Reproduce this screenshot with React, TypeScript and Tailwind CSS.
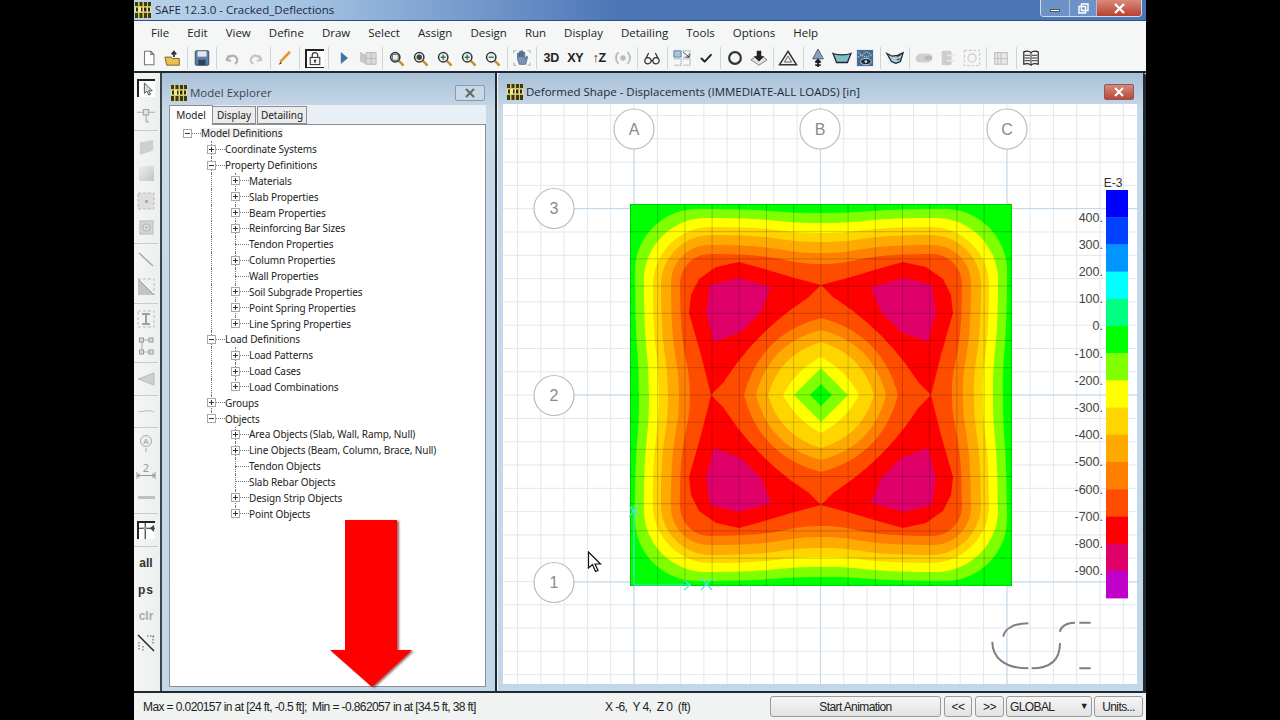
import React from "react";

const SafeLogo = () => (
  <svg width="16" height="16" viewBox="0 0 16 16" className="shrink-0">
    <rect width="16" height="16" fill="#d8c94a" />
    <path d="M0 0h3v4H0zM4.500 0h3v4h-3zM9 0h3v4H9zM13 0h3v4h-3zM0 11h3v5H0zM4.500 11h3v5h-3zM9 11h3v5H9zM13 11h3v5h-3z" fill="#3a3a18" />
    <rect y="5" width="16" height="5" fill="#f0e9a0" />
    <path d="M1 5.500h2v4H1zM6 5.500h1.500v4H6zM9 5.500h2.500v4H9zM13 5.500h2v4h-2z" fill="#2c2c10" />
  </svg>
);

const Zoom = ({ mark }: { mark?: string }) => (
  <svg width="17" height="17" viewBox="0 0 20 20">
    <path d="M12 12l5.500 5.500" stroke="#c89030" strokeWidth="3" strokeLinecap="round" />
    <circle cx="8.500" cy="8.500" r="5.500" fill="#e8f0f4" stroke="#30383c" strokeWidth="1.800" />
    {mark === "fill" && <circle cx="8.500" cy="8.500" r="3.200" fill="#444" />}
    {mark === "box" && <rect x="5" y="5" width="7" height="7" fill="none" stroke="#444" />}
    {(mark === "plus" || mark === "minus" || mark === "dot") && <path d="M5.500 8.500h6" stroke="#2a6a40" strokeWidth="1.500" />}
    {(mark === "plus" || mark === "dot") && <path d="M8.500 5.500v6" stroke="#2a6a40" strokeWidth="1.500" />}
  </svg>
);

const Txt = ({ children, dim }: { children: React.ReactNode; dim?: boolean }) => (
  <span className={`font-['Liberation_Sans',sans-serif] text-[12.500px] font-bold tracking-[-0.3px] ${dim ? "text-[#b0b0b0]" : "text-[#222]"}`}>{children}</span>
);

const ic = (d: string, stroke = "#555", fill = "none", sw = 1.5) => (
  <svg width="18" height="18" viewBox="0 0 20 20">
    <path d={d} stroke={stroke} fill={fill} strokeWidth={sw} strokeLinejoin="round" strokeLinecap="round" />
  </svg>
);

type Tool = { n: React.ReactNode; box?: boolean } | "sep";

const topTools: Tool[] = [
  { n: ic("M5 2.500h7l3.500 3.500v11.500H5zM12 2.500V6h3.500", "#777", "#fff", 1.2) },
  { n: <svg width="20" height="18" viewBox="0 0 22 20"><path d="M2 9h7l1 1.500h8V18H4z" fill="#e8c050" stroke="#7a5a20" /><path d="M12 9V4M9.500 6l2.500-3 2.500 3" stroke="#333" strokeWidth="2" fill="none" /></svg> },
  "sep",
  { n: <svg width="18" height="18" viewBox="0 0 20 20"><rect x="2.500" y="2" width="15" height="16" rx="1" fill="#5f7fa8" stroke="#33465f" /><rect x="5" y="2.500" width="10" height="6" fill="#e4e8ee" /><rect x="6" y="12" width="8" height="6" fill="#2e3f58" /></svg> },
  "sep",
  { n: ic("M6 8l-2 4 4 1M4.500 11.500C7 6.500 13 6 15.500 10.500c.8 2 .3 4-1.500 5.500", "#b0b0b0", "none", 2.400) },
  { n: ic("M14 8l2 4-4 1M15.500 11.500C13 6.500 7 6 4.500 10.500c-.8 2-.3 4 1.500 5.500", "#c4c4c4", "none", 2.400) },
  "sep",
  { n: <svg width="18" height="18" viewBox="0 0 20 20"><path d="M15.500 3L5 14" stroke="#e8962a" strokeWidth="3" /><path d="M5 14l-2 3.500L6.500 16z" fill="#444" /></svg> },
  "sep",
  { box: true, n: <svg width="16" height="16" viewBox="0 0 18 20"><rect x="3" y="8" width="12" height="9" fill="#f4f4f4" stroke="#333" strokeWidth="1.300" /><path d="M5.500 8V5.500a3.500 3.500 0 0 1 7 0V8" stroke="#333" strokeWidth="1.500" fill="none" /><circle cx="9" cy="12" r="1.400" fill="#333" /><path d="M9 12v3" stroke="#333" strokeWidth="1.400" /></svg> },
  "sep",
  { n: <svg width="16" height="16" viewBox="0 0 20 20"><path d="M6 2.500l9 7.500-9 7.500z" fill="#3d76ad" /></svg> },
  { n: <svg width="20" height="18" viewBox="0 0 22 20"><path d="M2 3l7 3.500V17l-7-3z" fill="#c8c8c8" /><path d="M9 4h11v13H9zM9 10.500h11M14.500 4v13" stroke="#b4b4b4" fill="#dcdcdc" /></svg> },
  "sep",
  { n: <Zoom mark="box" /> },
  { n: <Zoom mark="fill" /> },
  { n: <Zoom mark="dot" /> },
  { n: <Zoom mark="plus" /> },
  { n: <Zoom mark="minus" /> },
  "sep",
  { n: <svg width="20" height="20" viewBox="0 0 22 22"><path d="M6 12V6.500a1 1 0 0 1 2 0V10V4.500a1 1 0 0 1 2 0V10V4a1 1 0 0 1 2 0v6V5.500a1 1 0 0 1 2 0V12l1.500-2.500c.8-1 2 0 1.500 1L15 18H8z" fill="#7c94b8" stroke="#445a7e" strokeWidth=".8" /><path d="M2 3v3M2 3h3M20 3v3M20 3h-3M2 19v-3M2 19h3M20 19v-3M20 19h-3" stroke="#aaa" /></svg> },
  "sep",
  { n: <Txt>3D</Txt> },
  { n: <Txt>XY</Txt> },
  { n: <Txt>↑Z</Txt> },
  { n: <svg width="18" height="18" viewBox="0 0 20 20"><circle cx="10" cy="10" r="3" fill="#bbb" /><path d="M5 3.500C1 8 1 12 5 16.500M15 3.500c4 4.500 4 8.500 0 13" stroke="#bbb" strokeWidth="2" fill="none" /></svg> },
  "sep",
  { n: ic("M2 13a3.500 3.500 0 1 0 7 0 3.500 3.500 0 1 0-7 0M11 13a3.500 3.500 0 1 0 7 0 3.500 3.500 0 1 0-7 0M9 13h2M3 11l3-6M17 11l-3-6", "#333", "none", 1.400) },
  "sep",
  { n: <svg width="20" height="18" viewBox="0 0 22 20"><path d="M2 2h8v7H2z" fill="#a8c4e0" stroke="#5a7a9e" /><path d="M12 2h8v7h-8M2 11h8v7H2M12 11h8v7h-8" fill="none" stroke="#888" strokeDasharray="1.500 1" /><path d="M12 3l7 6M15 9h4V5" stroke="#335" fill="none" /></svg> },
  { n: ic("M5 10.500l3.500 3.500L15.500 6.500", "#222", "none", 2.200) },
  "sep",
  { n: <svg width="18" height="18" viewBox="0 0 20 20"><circle cx="10" cy="10" r="6.500" fill="none" stroke="#333" strokeWidth="2.400" /></svg> },
  { n: <svg width="20" height="18" viewBox="0 0 22 20"><path d="M2 12l9-6 9 6-9 6z" fill="#e4e4e4" stroke="#777" /><path d="M8.500 2h5v6H17l-6 6-6-6h3.500z" fill="#222" /></svg> },
  "sep",
  { n: <svg width="20" height="18" viewBox="0 0 22 20"><path d="M11 2.500L20.500 17.500h-19z" fill="#eee" stroke="#333" strokeWidth="1.600" /><path d="M11 8l4 6.500H7z" fill="none" stroke="#555" /></svg> },
  "sep",
  { n: <svg width="18" height="20" viewBox="0 0 20 22"><path d="M10 1L16 12H4z" fill="#8aa0b8" stroke="#4a5a70" /><path d="M10 13v8M7 16l3-3 3 3M7 19h6" stroke="#222" strokeWidth="2" fill="none" /></svg> },
  { n: <svg width="22" height="18" viewBox="0 0 24 20"><path d="M2 5c5 2 15 2 20 0l-4 10H6z" fill="#7fc0c8" stroke="#223" strokeWidth="1.400" /></svg> },
  { n: <svg width="18" height="18" viewBox="0 0 20 20"><rect x="1" y="1" width="18" height="18" fill="#4a6c90" /><path d="M2 4l5 3 4-4 6 3M2 9l4-2 5 2 6-2" stroke="#cfe0f0" strokeDasharray="1.500 1" fill="none" /><ellipse cx="11" cy="14" rx="6" ry="3.500" fill="#1c2a3a" stroke="#d0dde8" /><circle cx="11" cy="14" r="1.500" fill="#d0dde8" /></svg> },
  "sep",
  { n: <svg width="20" height="18" viewBox="0 0 22 20"><path d="M2 5l6 3 6-1 6-3-3 10-5 2-5-2z" fill="#a8d0d8" stroke="#223" strokeWidth="1.400" /><path d="M13 9l5-3M13 12l4-1" stroke="#223" /></svg> },
  "sep",
  { n: <svg width="20" height="18" viewBox="0 0 22 20"><path d="M2 8l4-3h10l4 2v5l-4 3H6l-4-2z" fill="#cfcfcf" /><path d="M12 8h8v4h-8z" fill="#b8b8b8" /></svg> },
  { n: <svg width="18" height="18" viewBox="0 0 20 20"><rect x="3" y="2" width="11" height="16" rx="2" fill="#cdcdcd" /><path d="M9 7h8M9 13h8" stroke="#e8e8e8" strokeWidth="2" /></svg> },
  { n: <svg width="18" height="18" viewBox="0 0 20 20"><rect x="1.500" y="1.500" width="17" height="17" fill="none" stroke="#c0c0c0" strokeDasharray="3 2" /><circle cx="10" cy="10" r="4.500" fill="none" stroke="#d0d0d0" strokeWidth="1.500" /></svg> },
  "sep",
  { n: ic("M3 4h14v13H3zM3 10.500h14M10 4v13M6.500 4v13", "#c0c0c0", "#e8e8e8", 1.200) },
  "sep",
  { n: <svg width="18" height="18" viewBox="0 0 20 20"><path d="M2 3c3-1 6-1 8 1 2-2 5-2 8-1v14c-3-1-6-1-8 1-2-2-5-2-8-1z" fill="#f5f5f5" stroke="#222" strokeWidth="1.300" /><path d="M10 4v14M3 7h6M3 10h6M3 13h6M11 7h6M11 10h6M11 13h6" stroke="#222" /></svg> },
];

const sideTools: Tool[] = [
  { box: true, n: <svg width="14" height="16" viewBox="0 0 16 18"><path d="M5 2v12l3-2.500 2 4.500 2-1-2-4h4z" fill="#d8dde2" stroke="#444" /></svg> },
  { n: <svg width="20" height="20" viewBox="0 0 22 22"><path d="M1 8h20" stroke="#aaa" /><rect x="8" y="5" width="6" height="6" fill="#e4e4e4" stroke="#999" /><path d="M11 10v9l2-1.500 1 2.500" stroke="#aaa" fill="#ddd" /></svg> },
  "sep",
  { n: <svg width="16" height="18" viewBox="0 0 18 20"><path d="M2 5l15-3v12L2 19z" fill="#cfcfcf" /></svg> },
  { n: <div className="w-[15px] h-[15px] bg-[linear-gradient(135deg,#eeeeee,#c4c4c4)]" /> },
  { n: <svg width="18" height="18" viewBox="0 0 18 18"><rect x="1" y="1" width="16" height="16" fill="#dedede" stroke="#bbb" strokeDasharray="3 2" /><rect x="8" y="8" width="3" height="3" fill="#aaa" /></svg> },
  { n: <svg width="15" height="15" viewBox="0 0 16 16"><rect x="1" y="1" width="14" height="14" fill="#d4d4d4" stroke="#bbb" /><circle cx="8" cy="8" r="4" fill="#ddd" stroke="#aaa" /><circle cx="8" cy="8" r="1" fill="#999" /></svg> },
  "sep",
  { n: <svg width="18" height="18" viewBox="0 0 18 18"><path d="M2 2l14 13" stroke="#aaa" strokeWidth="1.500" /></svg> },
  { n: <svg width="18" height="18" viewBox="0 0 18 18"><path d="M1 1v16h16z" fill="#c4c4c4" /><path d="M1 1h16v16" fill="none" stroke="#bbb" strokeDasharray="3 2" /><path d="M1 1l16 16" stroke="#999" /></svg> },
  "sep",
  { n: <svg width="18" height="18" viewBox="0 0 18 18"><rect x="1" y="1" width="16" height="16" fill="none" stroke="#bbb" strokeDasharray="3 2" /><path d="M5 4h8M5 14h8M9 4v10" stroke="#a0a0a0" strokeWidth="2" /></svg> },
  { n: <svg width="16" height="18" viewBox="0 0 16 18"><path d="M4 3v12M4 3h9M4 15h9" stroke="#aaa" fill="none" /><rect x="1.500" y="1" width="4" height="4" fill="#ddd" stroke="#999" /><rect x="1.500" y="13" width="4" height="4" fill="#ddd" stroke="#999" /><rect x="11" y="1" width="4" height="4" fill="#ddd" stroke="#999" /><rect x="11" y="13" width="4" height="4" fill="#ddd" stroke="#999" /></svg> },
  "sep",
  { n: <svg width="18" height="14" viewBox="0 0 18 14"><path d="M1 7l16-6v12z" fill="#d0d0d0" stroke="#bbb" /></svg> },
  "sep",
  { n: <svg width="18" height="8" viewBox="0 0 18 8"><path d="M1 5c3-2 3 1 6-1 2-1 3 1 5 0 2-1 3 0 5 1" stroke="#bbb" fill="none" /></svg> },
  "sep",
  { n: <svg width="14" height="20" viewBox="0 0 14 20"><circle cx="7" cy="7" r="5.500" fill="#eee" stroke="#aaa" /><text x="7" y="10" fontSize="8" textAnchor="middle" fill="#999" fontFamily="Liberation Sans">A</text><path d="M7 14v4" stroke="#aaa" /></svg> },
  { n: <div className="flex flex-col items-center leading-[9px] text-[11px] text-[#999]">2<svg width="20" height="7" viewBox="0 0 20 7"><path d="M1 0v7M19 0v7M1 3.500h18M4 1.500l-3 2 3 2M16 1.500l3 2-3 2" stroke="#999" fill="none" /></svg></div> },
  { n: <div className="w-[17px] h-[3px] bg-[#c0c0c0]" /> },
  "sep",
  { box: true, n: <svg width="16" height="16" viewBox="0 0 18 18"><path d="M0 6h18M7 0v18" stroke="#222" strokeWidth="1.200" /><circle cx="7" cy="6" r="2" fill="#7aa" /><path d="M17 2v8l-5-4z" fill="#444" /></svg> },
  "sep",
  { n: <span className="font-['Liberation_Sans',sans-serif] text-[12px] font-bold text-[#333]">all</span> },
  { n: <span className="font-['Liberation_Sans',sans-serif] text-[12px] font-bold tracking-[1px] text-[#333]">ps</span> },
  { n: <span className="font-['Liberation_Sans',sans-serif] text-[12px] font-bold text-[#aaa]">clr</span> },
  { n: <svg width="18" height="18" viewBox="0 0 18 18"><path d="M1 1l16 16" stroke="#222" strokeWidth="1.400" /><path d="M2 8v9M6 12v5M10 2h7M16 2v8" stroke="#555" strokeDasharray="1.500 1.500" fill="none" /></svg> },
];

type Node = { label: string; level: 0 | 1 | 2; kind: "plus" | "minus" | "none"; outer?: boolean; last?: boolean };

const tree: Node[] = [
  { label: "Model Definitions", level: 0, kind: "minus" },
  { label: "Coordinate Systems", level: 1, kind: "plus" },
  { label: "Property Definitions", level: 1, kind: "minus" },
  { label: "Materials", level: 2, kind: "plus", outer: true },
  { label: "Slab Properties", level: 2, kind: "plus", outer: true },
  { label: "Beam Properties", level: 2, kind: "plus", outer: true },
  { label: "Reinforcing Bar Sizes", level: 2, kind: "plus", outer: true },
  { label: "Tendon Properties", level: 2, kind: "none", outer: true },
  { label: "Column Properties", level: 2, kind: "plus", outer: true },
  { label: "Wall Properties", level: 2, kind: "none", outer: true },
  { label: "Soil Subgrade Properties", level: 2, kind: "plus", outer: true },
  { label: "Point Spring Properties", level: 2, kind: "plus", outer: true },
  { label: "Line Spring Properties", level: 2, kind: "plus", outer: true, last: true },
  { label: "Load Definitions", level: 1, kind: "minus" },
  { label: "Load Patterns", level: 2, kind: "plus", outer: true },
  { label: "Load Cases", level: 2, kind: "plus", outer: true },
  { label: "Load Combinations", level: 2, kind: "plus", outer: true, last: true },
  { label: "Groups", level: 1, kind: "plus" },
  { label: "Objects", level: 1, kind: "minus", last: true },
  { label: "Area Objects (Slab, Wall, Ramp, Null)", level: 2, kind: "plus" },
  { label: "Line Objects (Beam, Column, Brace, Null)", level: 2, kind: "plus" },
  { label: "Tendon Objects", level: 2, kind: "none" },
  { label: "Slab Rebar Objects", level: 2, kind: "none" },
  { label: "Design Strip Objects", level: 2, kind: "plus" },
  { label: "Point Objects", level: 2, kind: "plus", last: true },
];

const Guide = ({ on }: { on?: boolean }) => (
  <div className="w-[24px] shrink-0 self-stretch flex justify-center">
    {on && <div className="h-full border-l border-dotted border-[#777]" />}
  </div>
);

const TreeRow = ({ node }: { node: Node }) => (
  <div className="flex items-center h-[15.85px]">
    {node.level >= 1 && <Guide />}
    {node.level === 2 && <Guide on={node.outer} />}
    <div className="relative w-[24px] shrink-0 self-stretch flex items-center justify-center">
      {node.level > 0 && <div className={`absolute left-1/2 top-0 border-l border-dotted border-[#777] ${node.last ? "h-1/2" : "h-full"}`} />}
      <div className="absolute left-1/2 w-[14px] border-t border-dotted border-[#777]" />
      {node.kind !== "none" && (
        <div className="relative w-[9px] h-[9px] border border-[#a8a8a8] bg-white flex items-center justify-center">
          <div className="w-[5px] h-px bg-[#333]" />
          {node.kind === "plus" && <div className="absolute w-px h-[5px] bg-[#333]" />}
        </div>
      )}
    </div>
    <span className={`ml-[1px] whitespace-nowrap px-px ${node.level === 0 ? "bg-[#f0f0f0]" : ""}`}>{node.label}</span>
  </div>
);

const CloseBtn = ({ red }: { red?: boolean }) => (
  <div className={`w-[30px] h-[16px] rounded-[2px] border flex items-center justify-center ${red ? "border-[#8a5a5a] bg-[linear-gradient(#d98a7c,#b8483a)]" : "border-[#8a9aaa] bg-[#c9d8e6]"}`}>
    <svg width="12" height="10" viewBox="0 0 12 10">
      <path d="M2 1l8 8M10 1L2 9" stroke={red ? "#fff" : "#666"} strokeWidth="2" />
    </svg>
  </div>
);

// contour rings of the plate, drawn around the plot centre
const ring = (ra: number, rb: number, cr: number) => {
  const q: [number, number][][] = [
    [[ra, 0.28 * rb], [rb, 0.22 * rb], [rb, rb - cr]],
    [[rb, rb - cr * 0.45], [rb - cr * 0.45, rb], [rb - cr, rb]],
    [[0.22 * rb, rb], [0.28 * rb, ra], [0, ra]],
  ];
  const flip = ([x, y]: [number, number], sx: number, sy: number, swap: boolean) => {
    const [a, b] = swap ? [y, x] : [x, y];
    return `${a * sx} ${b * sy}`;
  };
  const quad = (sx: number, sy: number, swap: boolean) =>
    q.map((c) => "C" + c.map((p) => flip(p, sx, sy, swap)).join(" ")).join("");
  return `M${ra} 0` + quad(1, -1, false) + quad(-1, -1, true) + quad(-1, 1, false) + quad(1, 1, true) + "Z";
};

const diamond = (r: number, b: number) =>
  `M${r} 0Q${b} ${-b} 0 ${-r}Q${-b} ${-b} ${-r} 0Q${-b} ${b} 0 ${r}Q${b} ${b} ${r} 0Z`;

const mirror = (pts: [number, number][], sx: number, sy: number) =>
  pts.map(([x, y]) => `${x * sx},${y * sy}`).join(" ");

const redShape: [number, number][] = [
  [110, 0], [120, -40], [132, -82], [130, -100], [122, -116], [105, -128], [82, -133], [60, -127], [30, -118], [0, -110],
];
const pinkShape: [number, number][] = [
  [115, -83], [111, -110], [83, -117], [50, -108], [60, -83], [80, -63], [107, -53],
];

const legend = ["#0000ff", "#0040ff", "#0095ff", "#00ffff", "#00ff80", "#00ff00", "#80ff00", "#ffff00", "#ffd500", "#ffaa00", "#ff8000", "#ff4d00", "#ff0000", "#e0006a", "#c000c8"];
const legendText = ["400.", "300.", "200.", "100.", "0.", "-100.", "-200.", "-300.", "-400.", "-500.", "-600.", "-700.", "-800.", "-900."];

const Canvas = () => {
  const vx = Array.from({ length: 28 }, (_, i) => 517.5 + i * 23.3);
  const hy = Array.from({ length: 25 }, (_, i) => 115.5 + i * 23.3);
  const plot = Array.from({ length: 15 }, (_, i) => i * 27.2);
  return (
    <svg viewBox="503 104 634 580" width="634" height="580" className="block bg-white font-['Liberation_Sans',sans-serif]">
      {vx.map((x) => <path key={x} d={`M${x} 104V684`} stroke="#e0e8f0" />)}
      {hy.map((y) => <path key={y} d={`M503 ${y}H1137`} stroke="#e0e8f0" />)}
      {[634, 820.500, 1007].map((x) => <path key={x} d={`M${x} 149V684`} stroke="#c5d8e8" />)}
      {[208.500, 395, 582].map((y) => <path key={y} d={`M574 ${y}H1137`} stroke="#c5d8e8" />)}
      {[["A", 634, 129], ["B", 820, 129], ["C", 1007, 129], ["3", 554, 208.500], ["2", 554, 395.500], ["1", 554, 582.500]].map(([t, x, y]) => (
        <g key={t as string}>
          <circle cx={x} cy={y} r="20" fill="#fff" stroke="#bcbcbc" strokeWidth="1.200" />
          <text x={x} y={Number(y) + 5.500} textAnchor="middle" fontSize="16" fill="#8a8a8a">{t}</text>
        </g>
      ))}
      <g transform="translate(821 395)">
        <rect x="-191" y="-191" width="382" height="382" fill="#00ff00" />
        <path d={ring(182, 186, 62)} fill="#80ff00" />
        <path d={ring(172, 177, 62)} fill="#ffff00" />
        <path d={ring(162, 168, 58)} fill="#ffd500" />
        <path d={ring(153, 160, 50)} fill="#ffaa00" />
        <path d={ring(142, 150, 38)} fill="#ff8000" />
        <path d={ring(131, 141, 30)} fill="#ff4d00" />
        {[[1, 1], [-1, 1], [1, -1], [-1, -1]].map(([sx, sy]) => (
          <polygon key={`r${sx}${sy}`} points={mirror(redShape, sx, sy)} fill="#ff0000" />
        ))}
        <rect x="-80" y="-80" width="160" height="160" fill="#ff0000" />
        {[[1, 1], [-1, 1], [1, -1], [-1, -1]].map(([sx, sy]) => (
          <polygon key={`p${sx}${sy}`} points={mirror(pinkShape, sx, sy)} fill="#e0006a" />
        ))}
        <path d={diamond(105, 67)} fill="#ff4d00" />
        <path d={diamond(77, 61)} fill="#ff8000" />
        <path d={diamond(65, 52)} fill="#ffaa00" />
        <path d={diamond(53, 41)} fill="#ffd500" />
        <path d={diamond(38, 25)} fill="#ffff00" />
        <path d={diamond(27, 13.500)} fill="#80ff00" />
        <path d={diamond(11, 5.500)} fill="#00ff00" />
      </g>
      {plot.map((d) => (
        <g key={d} stroke="#000" strokeOpacity=".2">
          <path d={`M${630.500 + d} 204V586`} />
          <path d={`M630 ${204.500 + d}H1012`} />
        </g>
      ))}
      <path d="M634 505V585M634 585H690M629 505l5 7 5-7M629 517l5-7 5 7M684 580l6 5-6 5M701 578l11 12M712 578l-11 12" stroke="#40e8e0" strokeWidth="1.200" fill="none" />
      <path d="M1028.300 623.300C1012 623.300 1004 630 1003.300 636.700M992.300 641.700C992.300 658 1005 668.300 1028.300 668.300M1031.700 668.300C1050 668.300 1060 660 1060 643M1060 631.700C1060 628 1065 622.700 1075 622.700M1079.300 622.700H1090.700M1079.300 668.300H1090.700" stroke="#808080" strokeWidth="2" fill="none" />
      {legend.map((c, i) => <rect key={c} x="1106" y={190 + i * 27.200} width="22" height="27.600" fill={c} />)}
      <text x="1113" y="187" textAnchor="middle" fontSize="12" fill="#333">E-3</text>
      {legendText.map((t, i) => (
        <text key={t} x="1103" y={221.500 + i * 27.200} textAnchor="end" fontSize="12.500" fill="#444">{t}</text>
      ))}
    </svg>
  );
};

const menus = ["File", "Edit", "View", "Define", "Draw", "Select", "Assign", "Design", "Run", "Display", "Detailing", "Tools", "Options", "Help"];

const StatusBtn = ({ children, className }: { children: React.ReactNode; className: string }) => (
  <div className={`h-[21px] border border-[#9a9a9a] rounded-[3px] bg-[linear-gradient(#f6f6f6,#e2e2e2)] flex items-center justify-center ${className}`}>{children}</div>
);

export default function App() {
  return (
    <div className="relative w-[1280px] h-[720px] bg-black overflow-hidden flex justify-center font-['Noto_Sans',sans-serif] text-[#222]">
      <div className="w-[1012px] h-full flex flex-col bg-[#f0f3f1]">
        <div className="h-[21px] shrink-0 flex items-center bg-[linear-gradient(90deg,#b9d2ea_0%,#a9c6e4_15%,#7ea2d0_30%,#4b75b6_48%,#4a76b8_100%)] border-b border-[#2d4f86]">
          <div className="ml-[1px] mr-[4px]"><SafeLogo /></div>
          <span className="font-['Open_Sans',sans-serif] text-[11.500px] text-[#1d2a3a]">SAFE 12.3.0 - Cracked_Deflections</span>
          <div className="ml-auto mr-[4px] mb-[3px] flex h-[17px] rounded-b-[4px] border border-t-0 border-[#cfdcec] overflow-hidden">
            <div className="w-[28px] flex items-center justify-center bg-[#6d92c6]"><div className="w-[10px] h-[3px] mt-[5px] bg-white border border-[#555]" /></div>
            <div className="w-[28px] flex items-center justify-center bg-[#6d92c6] border-x border-[#a8bfdc]">
              <svg width="11" height="11" viewBox="0 0 11 11"><path d="M3.500 1h6.500v6.500H3.500zM1 3.500h6.500V10H1z" fill="#6d92c6" stroke="#fff" strokeWidth="1.400" /></svg>
            </div>
            <div className="w-[44px] flex items-center justify-center bg-[linear-gradient(#d98a7c,#b8402f)]">
              <svg width="13" height="11" viewBox="0 0 13 11"><path d="M2 1l9 9M11 1l-9 9" stroke="#fff" strokeWidth="2.400" /></svg>
            </div>
          </div>
        </div>
        <div className="h-[24px] shrink-0 flex items-center gap-[18px] pl-[17px] bg-[#f5f7f6] font-['Open_Sans',sans-serif] text-[11.500px]">
          {menus.map((m) => <span key={m}>{m}</span>)}
        </div>
        <div className="h-[28px] shrink-0 flex items-center pl-[3px] bg-[#f5f7f6] border-b-2 border-[#1f2a30]">
          {topTools.map((t, i) =>
            t === "sep" ? (
              <div key={i} className="w-[5.500px] h-[22px] flex justify-center"><div className="w-px h-full bg-[#d0d4d6]" /></div>
            ) : (
              <div key={i} className="w-[23.900px] h-[26px] flex items-center justify-center">
                {t.box ? <div className="w-[19px] h-[19px] flex items-center justify-center border-l-2 border-t-2 border-b border-[#222] bg-white">{t.n}</div> : t.n}
              </div>
            )
          )}
        </div>
        <div className="flex-1 min-h-0 flex">
          <div className="w-[28px] shrink-0 flex flex-col items-center pt-[1.500px] pr-[2px] bg-[linear-gradient(90deg,#f4f6f5,#ebefee)] border-r-2 border-[#3a444a]">
            {sideTools.map((t, i) =>
              t === "sep" ? (
                <div key={i} className="w-full h-[6px] flex items-center"><div className="w-full h-px bg-[#c8cccc]" /></div>
              ) : (
                <div key={i} className="w-[22px] h-[26.700px] flex items-center justify-center">
                  {t.box ? <div className="w-[18px] h-[18px] flex items-center justify-center border-l-2 border-t-2 border-[#222] bg-white">{t.n}</div> : t.n}
                </div>
              )
            )}
          </div>
          <div className="w-[335px] shrink-0 flex flex-col pt-[4px] pl-[7px] pr-[9px] pb-[4px] border-r-2 border-[#1f2a30] bg-[linear-gradient(#a8c0d8,#c8d9e8_6%,#c3d7e8)]">
            <div className="h-[28px] shrink-0 flex items-center pt-[4px]">
              <div className="ml-[2px] mr-[3px]"><SafeLogo /></div>
              <span className="font-['Open_Sans',sans-serif] text-[11.500px] text-[#3a4650]">Model Explorer</span>
              <div className="ml-auto mr-[1px]"><CloseBtn /></div>
            </div>
            <div className="h-[19px] shrink-0 flex items-end text-[10px] bg-[#e8eff5]">
              <div className="w-[44px] h-[20px] flex items-center justify-center bg-white border border-b-0 border-[#8a8f94] relative -mb-px z-10">Model</div>
              <div className="w-[43px] h-[18px] flex items-center justify-center bg-[#ececec] border border-l-0 border-[#8a8f94]">Display</div>
              <div className="w-[50px] h-[18px] ml-px flex items-center justify-center bg-[#ececec] border border-[#8a8f94]">Detailing</div>
            </div>
            <div className="flex-1 bg-white border border-[#8a8f94] pt-[0.500px] pl-[5px] text-[10px] leading-none tracking-[-0.1px]">
              {tree.map((n) => <TreeRow key={n.label} node={n} />)}
            </div>
          </div>
          <div className="flex-1 min-w-0 flex flex-col pt-[4px] pl-[5px] pr-[6px] pb-[3px] ml-[1px] border-r-[3px] border-[#1f2a30] rounded-t-[3px] bg-[linear-gradient(#a8c0d8,#c8d9e8_6%,#c3d7e8)]">
            <div className="h-[27px] shrink-0 flex items-center pt-[3px]">
              <div className="mr-[3px] ml-[4px]"><SafeLogo /></div>
              <span className="font-['Open_Sans',sans-serif] text-[11.500px] text-[#1d2a3a]">Deformed Shape - Displacements (IMMEDIATE-ALL LOADS)  [in]</span>
              <div className="ml-auto mr-[3px]"><CloseBtn red /></div>
            </div>
            <Canvas />
          </div>
        </div>
        <div className="h-[29px] shrink-0 flex items-center border-t-2 border-[#1f2a30] bg-[#f0f3f1] font-['Liberation_Sans',sans-serif] text-[12px] tracking-[-0.6px] whitespace-pre">
          <span className="ml-[9px] w-[462px]">Max = 0.020157 in at [24 ft, -0.5 ft];  Min = -0.862057 in at [34.5 ft, 38 ft]</span>
          <span className="w-[165px]">X -6,  Y 4,  Z 0  (ft)</span>
          <StatusBtn className="w-[171px]">Start Animation</StatusBtn>
          <StatusBtn className="w-[28px] ml-[3px]">&lt;&lt;</StatusBtn>
          <StatusBtn className="w-[29px] ml-[3px]">&gt;&gt;</StatusBtn>
          <StatusBtn className="w-[86px] ml-[2px] !justify-between px-[3px]">GLOBAL<span className="text-[9px]">▼</span></StatusBtn>
          <StatusBtn className="w-[49px] ml-[2px]">Units...</StatusBtn>
        </div>
      </div>
      {/* annotations on top of the recording */}
      <svg width="90" height="175" viewBox="0 0 90 175" className="absolute left-[328px] top-[517px] drop-shadow-[2px_1px_1px_rgba(110,30,30,0.7)]">
        <path d="M17 3h52v130h15L44 170 2 133h15z" fill="#ff0000" />
      </svg>
      <svg width="16" height="22" viewBox="0 0 16 22" className="absolute left-[587px] top-[551px]">
        <path d="M1.500 1v16l4-3.500 3 7 2.500-1-3-6.500h5.500z" fill="#fff" stroke="#111" strokeWidth="1.200" />
      </svg>
    </div>
  );
}
